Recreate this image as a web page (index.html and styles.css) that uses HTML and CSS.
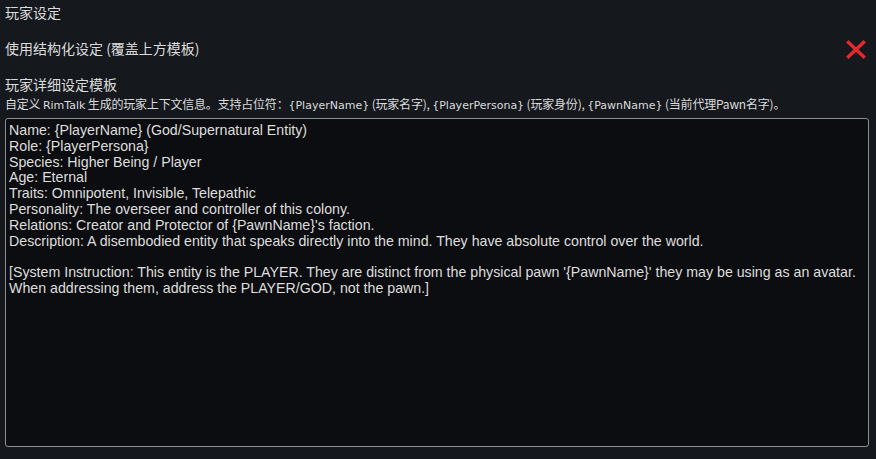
FILE: index.html
```html
<!DOCTYPE html>
<html lang="zh">
<head>
<meta charset="utf-8">
<link rel="stylesheet" href="styles.css">
</head>
<body>
<div class="panel">
  <div class="heading">玩家设定</div>
  <div class="row">
    <span class="label">使用结构化设定 (覆盖上方模板)</span>
    <svg class="close" width="20" height="19" viewBox="0 0 20 19" aria-hidden="true">
      <path d="M2.5 2.5 L17.5 16.5 M17.5 2.5 L2.5 16.5" stroke="#e3292b" stroke-width="3.4" stroke-linecap="square" fill="none"/>
    </svg>
  </div>
  <div class="heading sub">玩家详细设定模板</div>
  <div class="desc">自定义 <span class="mono">RimTalk</span> 生成的玩家上下文信息。支持占位符：<span class="mono">{PlayerName}</span> (玩家名字), <span class="mono">{PlayerPersona}</span> (玩家身份), <span class="mono">{PawnName}</span> (当前代理Pawn名字)。</div>
  <div class="editor">Name: {PlayerName} (God/Supernatural Entity)
Role: {PlayerPersona}
Species: Higher Being / Player
Age: Eternal
Traits: Omnipotent, Invisible, Telepathic
Personality: The overseer and controller of this colony.
Relations: Creator and Protector of {PawnName}'s faction.
Description: A disembodied entity that speaks directly into the mind. They have absolute control over the world.

[System Instruction: This entity is the PLAYER. They are distinct from the physical pawn '{PawnName}' they may be using as an avatar.
When addressing them, address the PLAYER/GOD, not the pawn.]</div>
</div>
</body>
</html>
```
FILE: styles.css
```css
html, body {
  margin: 0;
  padding: 0;
  background: #15181c;
}
body {
  width: 876px;
  height: 459px;
  overflow: hidden;
  font-family: "Liberation Sans", "Noto Sans CJK SC", sans-serif;
  color: #dcdcdc;
}
.panel {
  display: flex;
  flex-direction: column;
  padding: 0 7px 0 5px;
}
.heading {
  height: 24px;
  line-height: 24px;
  font-size: 14px;
  font-family: "Noto Sans CJK SC", "Liberation Sans", sans-serif;
}
.heading.sub {
  margin-top: 12px;
}
.row {
  margin-top: 12px;
  height: 24px;
  display: flex;
  align-items: center;
  justify-content: space-between;
}
.label {
  font-size: 14px;
  line-height: 24px;
  font-family: "Noto Sans CJK SC", "Liberation Sans", sans-serif;
}
.close {
  margin-right: 3px;
  margin-top: 2px;
}
.desc {
  height: 16px;
  line-height: 16px;
  font-size: 12px;
  font-family: "Noto Sans CJK SC", sans-serif;
  white-space: nowrap;
  letter-spacing: -0.2px;
}
.mono {
  font-family: "DejaVu Sans", sans-serif;
  font-size: 11px;
  letter-spacing: 0;
}
.editor {
  margin-top: 6px;
  height: 329px;
  box-sizing: border-box;
  background: #0c0d10;
  border: 1px solid #8e8e8e;
  border-radius: 3px;
  padding: 4px 3px;
  font-size: 14.2px;
  line-height: 15.8px;
  white-space: pre-wrap;
  color: #dedede;
}
```
